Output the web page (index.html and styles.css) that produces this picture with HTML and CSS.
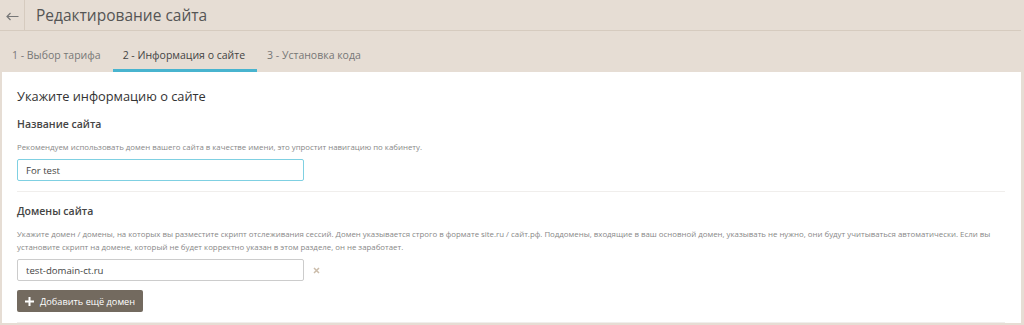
FILE: index.html
```
<!DOCTYPE html>
<html>
  <head>
    <title>Редактирование сайта</title>
    <link rel="stylesheet" href="styles.css">
  </head>
  <body>
    <div class="topbar">
      <a class="back" href="#">
        <svg width="13" height="9" viewBox="0 0 13 9"><path d="M12.5 4.5H1M4.5 1L1 4.5L4.5 8" fill="none" stroke="#777" stroke-width="1.2"/></svg>
      </a>
      <h1 class="title">Редактирование сайта</h1>
    </div>
    <div class="tabs">
      <div class="tab">1 - Выбор тарифа</div>
      <div class="tab active">2 - Информация о сайте</div>
      <div class="tab">3 - Установка кода</div>
    </div>
    <div class="panel">
      <h2 class="panel-title">Укажите информацию о сайте</h2>

      <div class="section">
        <h3 class="section-title">Название сайта</h3>
        <p class="hint">Рекомендуем использовать домен вашего сайта в качестве имени, это упростит навигацию по кабинету.</p>
        <input class="field focused" type="text" value="For test">
      </div>

      <div class="section">
        <h3 class="section-title">Домены сайта</h3>
        <p class="hint">Укажите домен / домены, на которых вы разместите скрипт отслеживания сессий. Домен указывается строго в формате site.ru / сайт.рф. Поддомены, входящие в ваш основной домен, указывать не нужно, они будут учитываться автоматически. Если вы установите скрипт на домене, который не будет корректно указан в этом разделе, он не заработает.</p>
        <div class="domain-row">
          <input class="field" type="text" value="test-domain-ct.ru">
          <span class="remove">
            <svg width="7" height="7" viewBox="0 0 7 7"><path d="M1 1L6 6M6 1L1 6" stroke="#cbbcaa" stroke-width="1.5"/></svg>
          </span>
        </div>
        <button class="add-btn" type="button">
          <svg width="9" height="9" viewBox="0 0 9 9"><path d="M4.5 0V9M0 4.5H9" stroke="#fff" stroke-width="2"/></svg>
          Добавить ещё домен
        </button>
      </div>
    </div>
  </body>
</html>
```

FILE: styles.css
```
body {
  margin: 0;
  font-family: 'Open Sans', sans-serif;
  background-color: #e6ddd4;
  color: #444;
  padding-right: 3px;
}

.topbar {
  display: flex;
  align-items: stretch;
  height: 30px;
  border-bottom: 1px solid #d6cbbf;
}

.back {
  display: flex;
  align-items: center;
  justify-content: center;
  width: 25px;
  border-right: 1px solid #d6cbbf;
  text-decoration: none;
  padding-top: 2px;
  box-sizing: border-box;
}

.title {
  margin: 0 0 0 11px;
  font-size: 15.5px;
  font-weight: normal;
  line-height: 30px;
  color: #555;
}

.tabs {
  display: flex;
  padding-top: 10px;
  margin-left: 2px;
}

.tab {
  padding: 7px 12px 6px 10px;
  font-size: 10.5px;
  line-height: 15px;
  color: #777;
  border-bottom: 3px solid transparent;
}

.tab.active {
  color: #444;
  border-bottom-color: #48b4cf;
}

.panel {
  background-color: #ffffff;
  margin-left: 2px;
  padding: 15px 16px 0 15px;
}

.panel-title {
  margin: 0;
  font-size: 12.8px;
  line-height: 18px;
  font-weight: normal;
  color: #333;
}

.section {
  padding: 11px 0 10px;
  border-bottom: 1px solid #f0eeec;
}

.section-title {
  margin: 0;
  font-size: 10.5px;
  line-height: 16px;
  font-weight: 600;
  color: #444;
}

.hint {
  margin: 9px 0 5px;
  font-size: 7.85px;
  line-height: 13px;
  color: #888;
}

.field {
  display: block;
  box-sizing: border-box;
  width: 287px;
  height: 22px;
  padding: 0 8px;
  font-family: 'Open Sans', sans-serif;
  font-size: 9.6px;
  color: #444;
  border: 1px solid #cccccc;
  border-radius: 2px;
  outline: none;
}

.field.focused {
  border-color: #7fd0e2;
}

.domain-row {
  display: flex;
  align-items: center;
  gap: 9px;
}

.remove {
  display: flex;
}

.add-btn {
  display: flex;
  align-items: center;
  gap: 6px;
  margin-top: 9px;
  height: 22px;
  padding: 0 8px;
  background-color: #736a5f;
  color: #ffffff;
  border: none;
  border-radius: 2px;
  font-family: 'Open Sans', sans-serif;
  font-size: 9.2px;
}
```
